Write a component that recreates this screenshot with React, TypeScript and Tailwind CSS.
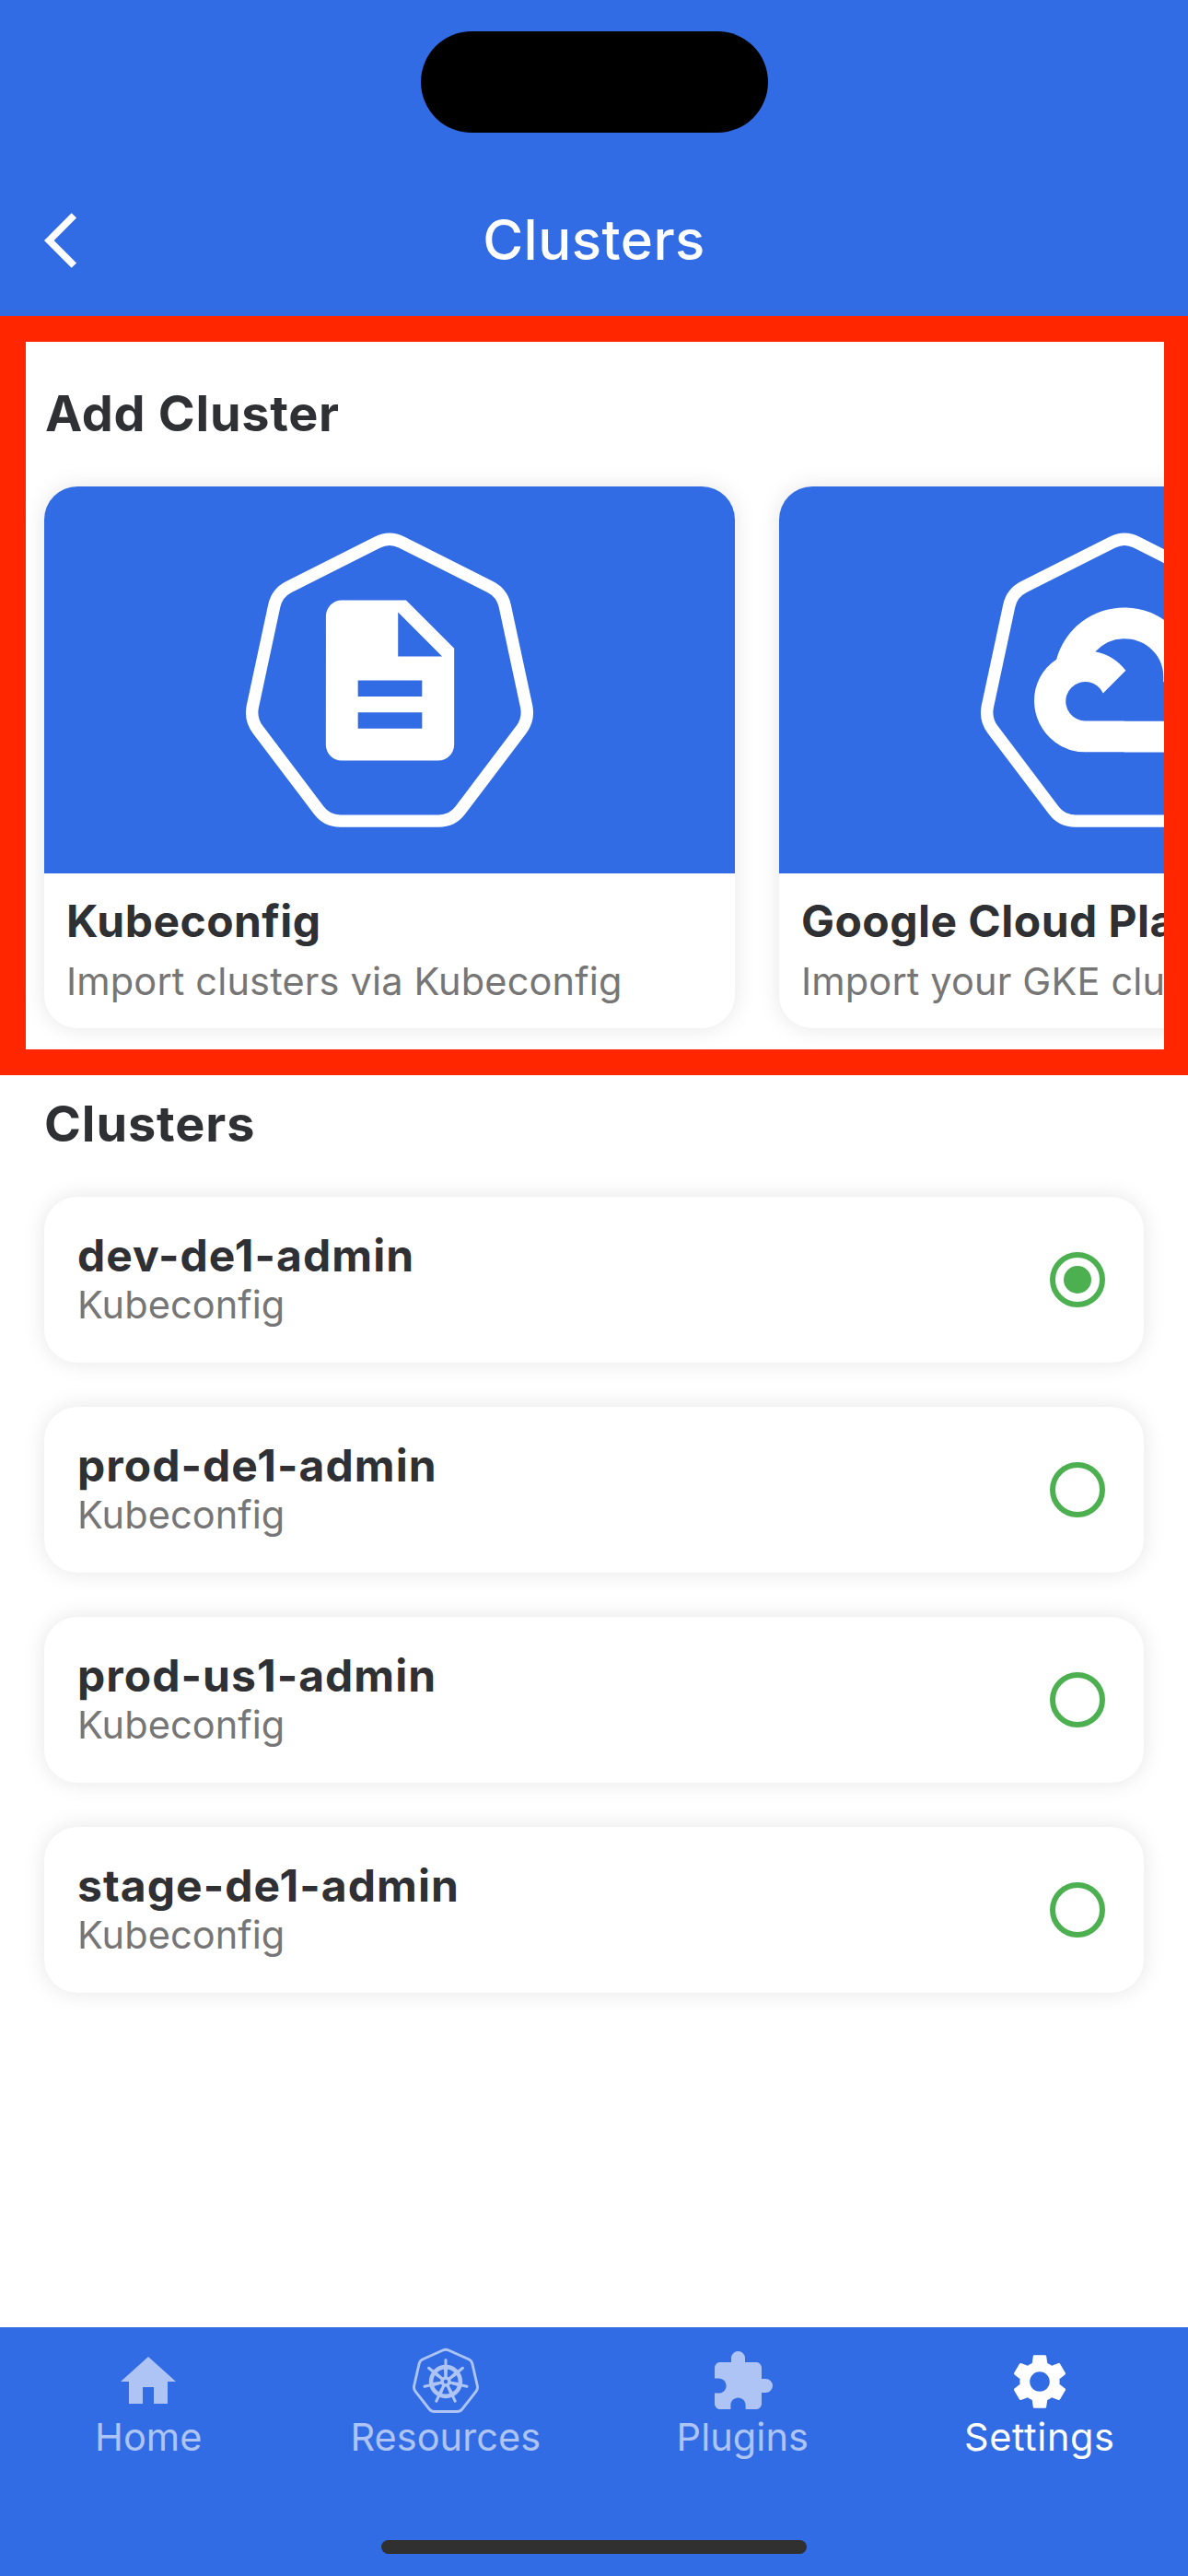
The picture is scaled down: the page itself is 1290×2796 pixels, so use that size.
import type { ReactNode } from "react";
import { MdArrowBackIos, MdDescription, MdExtension, MdHome, MdSettings } from "react-icons/md";
import { SiGooglecloud } from "react-icons/si";

type Point = [number, number];

/** Closed polygon path whose corners are rounded, starting d units from each vertex. */
function roundedPolygon(points: Point[], d: number): string {
  const toward = (a: Point, b: Point): string => {
    const len = Math.hypot(b[0] - a[0], b[1] - a[1]);
    const x = a[0] + ((b[0] - a[0]) * d) / len;
    const y = a[1] + ((b[1] - a[1]) * d) / len;
    return `${x.toFixed(2)} ${y.toFixed(2)}`;
  };
  const n = points.length;
  return (
    points
      .map((p, i) => {
        const prev = points[(i + n - 1) % n];
        const next = points[(i + 1) % n];
        return `${i === 0 ? "M" : "L"}${toward(p, prev)} Q${p[0]} ${p[1]} ${toward(p, next)}`;
      })
      .join(" ") + " Z"
  );
}

const badgePath = roundedPolygon(
  [
    [160, 4],
    [282.2, 65.5],
    [311.6, 202.6],
    [228, 313.1],
    [92, 313.1],
    [8.4, 202.6],
    [37.8, 65.5],
  ],
  14.5,
);

const smallBadgePath = roundedPolygon(
  [
    [36, 0.6],
    [64.1, 13.2],
    [71.1, 43.9],
    [51.8, 68.5],
    [20.2, 68.5],
    [0.9, 43.9],
    [7.9, 13.2],
  ],
  3.5,
);

function HeptagonBadge({ children }: { children: ReactNode }) {
  return (
    <div className="grid place-items-center text-white">
      <svg viewBox="0 0 320 320" className="col-start-1 row-start-1 size-[320px] overflow-visible">
        <path d={badgePath} fill="none" stroke="currentColor" strokeWidth="13.4" />
      </svg>
      <div className="col-start-1 row-start-1">{children}</div>
    </div>
  );
}

function KubernetesIcon() {
  const spokes = Array.from({ length: 7 }, (_, i) => (i * 360) / 7);
  return (
    <svg viewBox="0 0 72 72" className="size-[72px] overflow-visible" fill="none" stroke="currentColor">
      <path d={smallBadgePath} strokeWidth="2.9" />
      <circle cx="36" cy="36" r="15.9" strokeWidth="4.6" />
      <circle cx="36" cy="36" r="4" strokeWidth="3.6" />
      {spokes.map((angle) => (
        <g key={angle} transform={`rotate(${angle} 36 36)`}>
          <path d="M36 32V12.4" strokeWidth="3" strokeLinecap="round" />
          <path d="M33.7 19H38.3L37.2 32.5H34.8Z" fill="currentColor" stroke="none" />
        </g>
      ))}
    </svg>
  );
}

function ProviderCard({ title, subtitle, icon }: { title: string; subtitle: string; icon: ReactNode }) {
  return (
    <div className="h-[588px] w-[750px] shrink-0 overflow-hidden rounded-[36px] bg-white whitespace-nowrap shadow-[0_0_24px_rgba(0,0,0,0.1)]">
      <div className="flex h-[420px] items-center justify-center bg-[#326ce5]">
        <HeptagonBadge>{icon}</HeptagonBadge>
      </div>
      <div className="pt-6 pl-6">
        <div className="text-[48px] leading-[56px] font-bold tracking-[0.45px]">{title}</div>
        <div className="mt-[11px] text-[41.5px] leading-[52px] tracking-[0.15px] text-[#767676]">{subtitle}</div>
      </div>
    </div>
  );
}

function ClusterRow({ name, selected }: { name: string; selected: boolean }) {
  return (
    <div className="flex h-[180px] items-center justify-between rounded-[36px] bg-white pr-[42px] pl-9 shadow-[0_0_24px_rgba(0,0,0,0.1)]">
      <div className="h-[108px]">
        <div className="text-[48px] leading-[55px] font-bold tracking-[1.05px]">{name}</div>
        <div className="mt-[2px] text-[41.5px] leading-[49px] tracking-[0.08px] text-[#767676]">Kubeconfig</div>
      </div>
      <div className="flex size-[60px] items-center justify-center rounded-full border-[6px] border-[#4caf50]">
        {selected && <div className="size-[30px] rounded-full bg-[#4caf50]" />}
      </div>
    </div>
  );
}

function Tab({ label, active, icon }: { label: string; active?: boolean; icon: ReactNode }) {
  return (
    <div className={`flex flex-col items-center ${active ? "text-white" : "text-[#adc4f5]"}`}>
      {icon}
      <div className={`text-[41.5px] leading-[48px] ${active ? "tracking-[0.6px]" : "tracking-[0.04px]"}`}>
        {label}
      </div>
    </div>
  );
}

const clusters = ["dev-de1-admin", "prod-de1-admin", "prod-us1-admin", "stage-de1-admin"];

export default function App() {
  return (
    <div className="relative flex h-[2796px] w-[1290px] flex-col overflow-hidden bg-white font-['Inter',sans-serif] text-[#2f3034]">
      <header className="flex h-[345px] shrink-0 flex-col bg-[#326ce5] text-white">
        <div className="flex h-[177px] justify-center pt-[34px]">
          <div className="h-[110px] w-[377px] rounded-full bg-black" />
        </div>
        <div className="grid h-[168px] grid-cols-[1fr_auto_1fr] items-center">
          <MdArrowBackIos className="ml-12 size-[72px]" />
          <h1 className="pb-[2px] text-[60px] leading-[72px] font-medium tracking-[0.45px]">Clusters</h1>
        </div>
      </header>

      <main className="flex-1">
        <h2 className="pt-[72px] pl-[49px] text-[54px] leading-[64px] font-bold tracking-[0.73px]">Add Cluster</h2>
        <div className="mt-[47px] flex gap-12 pl-12">
          <ProviderCard
            title="Kubeconfig"
            subtitle="Import clusters via Kubeconfig"
            icon={<MdDescription className="size-[209px]" />}
          />
          <ProviderCard
            title="Google Cloud Platform"
            subtitle="Import your GKE clusters"
            icon={<SiGooglecloud className="size-[196px]" />}
          />
        </div>

        <h2 className="pt-[72px] pl-12 text-[54px] leading-[64px] font-bold tracking-[0.9px]">Clusters</h2>
        <div className="mt-[47px] flex flex-col gap-12 px-12">
          {clusters.map((name, i) => (
            <ClusterRow key={name} name={name} selected={i === 0} />
          ))}
        </div>
      </main>

      <nav className="flex h-[270px] shrink-0 flex-col items-center justify-between bg-[#326ce5] pt-[23px] pb-6">
        <div className="grid w-full grid-cols-4">
          <Tab label="Home" icon={<MdHome className="size-[72px]" />} />
          <Tab label="Resources" icon={<KubernetesIcon />} />
          <Tab label="Plugins" icon={<MdExtension className="size-[72px]" />} />
          <Tab label="Settings" active icon={<MdSettings className="size-[72px]" />} />
        </div>
        <div className="h-[15px] w-[462px] rounded-full bg-[#303030]" />
      </nav>

      {/* Highlight frame around the "Add Cluster" section */}
      <div className="absolute top-[343px] left-0 h-[824px] w-[1290px] border-y-[28px] border-r-[26px] border-l-[28px] border-[#ff2600]" />
    </div>
  );
}
